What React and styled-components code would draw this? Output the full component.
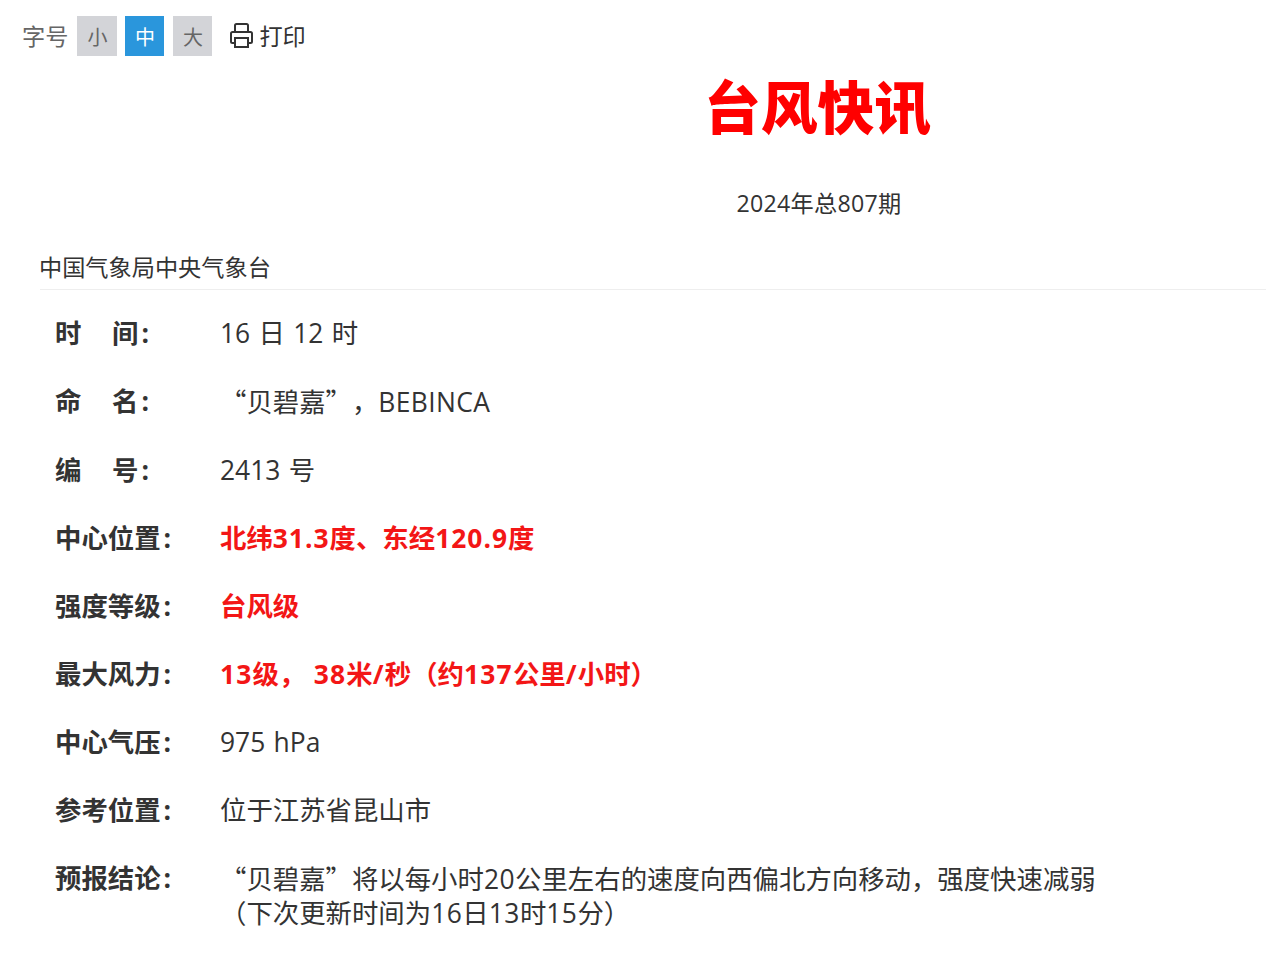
import React from 'react';
import styled, { createGlobalStyle } from 'styled-components';

const GlobalStyle = createGlobalStyle`
  html, body {
    margin: 0;
    padding: 0;
    background: #fff;
    overflow-x: hidden;
  }
  body {
    font-family: "Open Sans", "Noto Sans CJK SC", sans-serif;
    color: #333;
    text-spacing-trim: space-all;
  }
`;

const Page = styled.div`
  width: 1266px;
  height: 969px;
  overflow: hidden;
`;

const Toolbar = styled.div`
  display: flex;
  align-items: center;
  height: 40px;
  padding: 16px 0 0 22px;
  font-size: 23.2px;
`;

const ToolLabel = styled.span`
  color: #666;
  margin: 0 9px 2px 0;
`;

const SizeButton = styled.span`
  width: ${p => (p.$wide ? 40 : 39)}px;
  height: 40px;
  margin-right: ${p => (p.$wide ? 8 : 9)}px;
  display: flex;
  align-items: center;
  justify-content: center;
  font-size: 20px;
  background: ${p => (p.$active ? '#2a96dc' : '#d3d4d8')};
  color: ${p => (p.$active ? '#fff' : '#666')};
`;

const PrintLink = styled.span`
  display: flex;
  align-items: center;
  gap: 6px;
  margin: 0 0 2px 9px;
  color: #333;
`;

const Article = styled.div`
  width: 1558px;
  margin-left: 40px;
`;

const Title = styled.h1`
  margin: 0;
  padding-top: 12px;
  text-align: center;
  text-indent: -3px;
  color: #f00;
  font-size: 56.8px;
  line-height: 78px;
  font-weight: 900;
`;

const Issue = styled.div`
  margin-top: 40px;
  text-align: center;
  font-size: 23.2px;
  line-height: 34px;
  letter-spacing: 0.25px;
`;

const Source = styled.div`
  margin-top: 30px;
  padding-bottom: 5px;
  border-bottom: 1px solid #eee;
  font-size: 23.2px;
  line-height: 34px;
  text-indent: -1px;
`;

const Rows = styled.div`
  padding: 26px 0 0 15px;
  width: 1070px;
`;

const Row = styled.div`
  display: grid;
  grid-template-columns: 165px 1fr;
  font-size: 26.4px;
  line-height: 34px;
  margin-bottom: 34px;
`;

const Label = styled.span`
  font-weight: 700;
`;

const LabelGap = styled.span`
  display: inline-block;
  width: 30.6px;
`;

const Colon = styled.span`
  margin-left: 3px;
`;

const Value = styled.span`
  color: ${p => (p.$alert ? '#f31616' : '#333')};
  font-weight: ${p => (p.$alert ? 700 : 400)};
  word-spacing: 1.5px;
`;

const Latin = styled.span`
  letter-spacing: ${p => p.$spacing}px;
`;

const Cjk = styled.span`
  font-family: "Noto Sans CJK SC", sans-serif;
`;

const PrinterIcon = () => (
  <svg width="23" height="25" viewBox="0 0 23 25" fill="none" stroke="#333" strokeWidth="2">
    <path d="M5 9V2.5a1.5 1.5 0 0 1 1.5-1.5h10a1.5 1.5 0 0 1 1.5 1.5V9" />
    <path d="M5 20H2.5A1.5 1.5 0 0 1 1 18.5v-8A1.5 1.5 0 0 1 2.5 9h18a1.5 1.5 0 0 1 1.5 1.5v8a1.5 1.5 0 0 1-1.5 1.5H18" />
    <rect x="5" y="15" width="13" height="9" />
  </svg>
);

const App = () => (
  <Page>
    <GlobalStyle />
    <Toolbar>
      <ToolLabel>字号</ToolLabel>
      <SizeButton $wide>小</SizeButton>
      <SizeButton $active>中</SizeButton>
      <SizeButton>大</SizeButton>
      <PrintLink>
        <PrinterIcon />
        打印
      </PrintLink>
    </Toolbar>
    <Article>
      <Title>台风快讯</Title>
      <Issue>2024年总807期</Issue>
      <Source>中国气象局中央气象台</Source>
      <Rows>
        <Row>
          <Label>时<LabelGap />间<Colon>:</Colon></Label>
          <Value>16 日 12 时</Value>
        </Row>
        <Row>
          <Label>命<LabelGap />名<Colon>:</Colon></Label>
          <Value><Cjk>“</Cjk>贝碧嘉<Cjk>”，</Cjk><Latin $spacing={0.4}>BEBINCA</Latin></Value>
        </Row>
        <Row>
          <Label>编<LabelGap />号<Colon>:</Colon></Label>
          <Value>2413 号</Value>
        </Row>
        <Row>
          <Label>中心位置<Colon>:</Colon></Label>
          <Value $alert>北纬<Latin $spacing={1}>31.3</Latin>度、东经<Latin $spacing={1}>120.9</Latin>度</Value>
        </Row>
        <Row>
          <Label>强度等级<Colon>:</Colon></Label>
          <Value $alert>台风级</Value>
        </Row>
        <Row>
          <Label>最大风力<Colon>:</Colon></Label>
          <Value $alert><Latin $spacing={1.2}>13</Latin>级， <Latin $spacing={1.2}>38</Latin>米<Latin $spacing={1.2}>/</Latin>秒（约<Latin $spacing={1.2}>137</Latin>公里<Latin $spacing={1.2}>/</Latin>小时）</Value>
        </Row>
        <Row>
          <Label>中心气压<Colon>:</Colon></Label>
          <Value>975 hPa</Value>
        </Row>
        <Row>
          <Label>参考位置<Colon>:</Colon></Label>
          <Value>位于江苏省昆山市</Value>
        </Row>
        <Row>
          <Label>预报结论<Colon>:</Colon></Label>
          <Value>
            <Cjk>“</Cjk>贝碧嘉<Cjk>”</Cjk>将以每小时<Latin $spacing={0.5}>20</Latin>公里左右的速度向西偏北方向移动，强度快速减弱
            <br />
            （下次更新时间为<Latin $spacing={0.5}>16</Latin>日<Latin $spacing={0.5}>13</Latin>时<Latin $spacing={0.5}>15</Latin>分）
          </Value>
        </Row>
      </Rows>
    </Article>
  </Page>
);

export default App;
